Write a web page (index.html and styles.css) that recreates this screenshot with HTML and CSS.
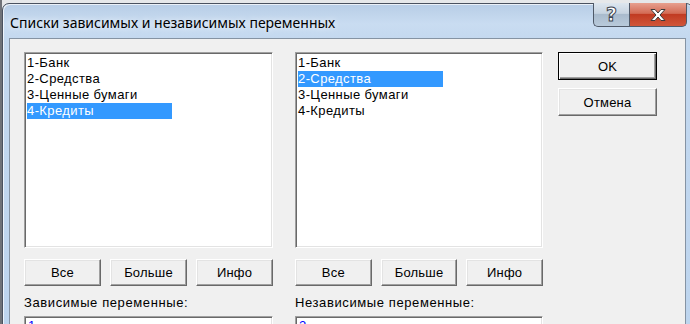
FILE: index.html
```html
<!DOCTYPE html>
<html lang="ru">
<head>
<meta charset="utf-8">
<title>Списки зависимых и независимых переменных</title>
<link rel="stylesheet" href="styles.css">
</head>
<body>
<div class="desk">
  <div class="behind"></div>
  <div class="window">
    <div class="titlebar">
      <span class="title">Списки зависимых и независимых переменных</span>
      <div class="caption-btns">
        <div class="cbtn help">?</div>
        <div class="cbtn close">
          <svg width="22" height="14" viewBox="0 0 22 14"><path d="M4 1.5h4l3 3.5 3-3.5h4l-5 5.5 5 5.5h-4l-3-3.5-3 3.5h-4l5-5.5z" fill="#fff" stroke="#3b3b3b" stroke-width="1"/></svg>
        </div>
      </div>
    </div>
    <div class="client">
      <div class="group">
        <div class="listbox">
          <div class="item">1-Банк</div>
          <div class="item">2-Средства</div>
          <div class="item">3-Ценные бумаги</div>
          <div class="item sel">4-Кредиты</div>
        </div>
        <div class="btnrow">
          <div class="btn">Все</div>
          <div class="btn">Больше</div>
          <div class="btn">Инфо</div>
        </div>
        <div class="label">Зависимые переменные:</div>
        <div class="edit">1</div>
      </div>
      <div class="group">
        <div class="listbox">
          <div class="item">1-Банк</div>
          <div class="item sel">2-Средства</div>
          <div class="item">3-Ценные бумаги</div>
          <div class="item">4-Кредиты</div>
        </div>
        <div class="btnrow">
          <div class="btn">Все</div>
          <div class="btn">Больше</div>
          <div class="btn">Инфо</div>
        </div>
        <div class="label">Независимые переменные:</div>
        <div class="edit">2</div>
      </div>
      <div class="side">
        <div class="btn big default">OK</div>
        <div class="btn big">Отмена</div>
      </div>
    </div>
  </div>
</div>
</body>
</html>
```
FILE: styles.css
```css
html, body {
  margin: 0;
  padding: 0;
  width: 690px;
  height: 324px;
  overflow: hidden;
  background: #e6e8ea;
}
.desk {
  display: flex;
  padding-top: 3px;
  height: 400px;
  background: linear-gradient(90deg, #6f7278 0, #6f7278 2px, #e6e8ea 2px);
}
.behind { width: 2px; flex: none; }
.window {
  width: 677px;
  flex: none;
  border: 1px solid #4a5260;
  border-radius: 7px 7px 0 0;
  background: linear-gradient(180deg, #b7cde6 0, #c9dcf1 20px, #c3d8ef 36px, #bcd4ee 100%);
  padding: 0 6px;
  box-shadow: inset 1px 1px 0 rgba(255,255,255,0.7), inset -1px 0 0 rgba(255,255,255,0.7);
}
.titlebar {
  height: 34px;
  display: flex;
  align-items: flex-start;
  justify-content: space-between;
}
.title {
  font-family: "Noto Sans", "Open Sans", sans-serif;
  font-size: 14px;
  color: #000;
  margin-top: 9px;
  margin-left: 1px;
  text-shadow: 0 0 6px rgba(255,255,255,0.9);
}
.caption-btns {
  display: flex;
  margin-right: -1px;
  margin-top: -1px;
}
.cbtn {
  height: 23px;
  border: 1px solid #4f5968;
  border-top: none;
  display: flex;
  align-items: center;
  justify-content: center;
}
.help {
  width: 35px;
  border-radius: 0 0 0 5px;
  border-right: none;
  background: linear-gradient(180deg, #dde6ef 0, #c6d3e0 45%, #a9bbcd 50%, #b9cadb 100%);
  font-family: "DejaVu Sans", sans-serif;
  font-weight: bold;
  font-size: 19px;
  color: #fff;
  -webkit-text-stroke: 1px #3c4450;
  line-height: 1;
}
.close {
  width: 56px;
  border-radius: 0 0 5px 0;
  background: linear-gradient(180deg, #e7a08f 0, #d36b55 45%, #c13b22 50%, #d0563a 100%);
}
.client {
  background: #f0f0f0;
  border: 1px solid #8593a3;
  border-bottom: none;
  height: 320px;
  display: flex;
  align-items: flex-start;
  padding: 13px 0 0 14px;
  font-family: "Liberation Sans", Arial, sans-serif;
  font-size: 13px;
  color: #000;
}
.group {
  width: 249px;
  display: flex;
  flex-direction: column;
  margin-right: 22px;
}
.group + .group { width: 248px; margin-right: 15px; }
.listbox {
  height: 192px;
  background: #fff;
  border: 1px solid;
  border-color: #a0a0a0 #fff #fff #a0a0a0;
  box-shadow: inset 1px 1px 0 #696969, inset -1px -1px 0 #e3e3e3;
  padding: 2px 0 0 2px;
}
.item {
  width: 145px;
  height: 16px;
  line-height: 16px;
  white-space: nowrap;
  letter-spacing: 0.4px;
}
.item.sel {
  background: #3399ff;
  color: #fff;
}
.btnrow {
  display: flex;
  gap: 9px;
  margin-top: 11px;
}
.btn {
  flex: 1;
  height: 25px;
  background: #f0f0f0;
  border: 1px solid;
  border-color: #fff #696969 #696969 #fff;
  box-shadow: inset -1px -1px 0 #a0a0a0, inset 1px 1px 0 #e3e3e3;
  display: flex;
  align-items: center;
  justify-content: center;
  letter-spacing: 0.2px;
}
.label {
  margin-top: 9px;
  height: 16px;
  line-height: 16px;
  letter-spacing: 0.6px;
}
.edit {
  margin-top: 5px;
  height: 24px;
  background: #fff;
  border: 1px solid;
  border-color: #a0a0a0 #fff #fff #a0a0a0;
  box-shadow: inset 1px 1px 0 #696969, inset -1px -1px 0 #e3e3e3;
  padding: 1px 0 0 3px;
  color: #0000ff;
  line-height: 16px;
}
.side {
  width: 99px;
  display: flex;
  flex-direction: column;
  gap: 8px;
}
.btn.big {
  flex: none;
  height: 26px;
}
.btn.default {
  border: 1px solid #000;
  box-shadow: inset 1px 1px 0 #fff, inset -1px -1px 0 #696969, inset -2px -2px 0 #a0a0a0;
}
```
